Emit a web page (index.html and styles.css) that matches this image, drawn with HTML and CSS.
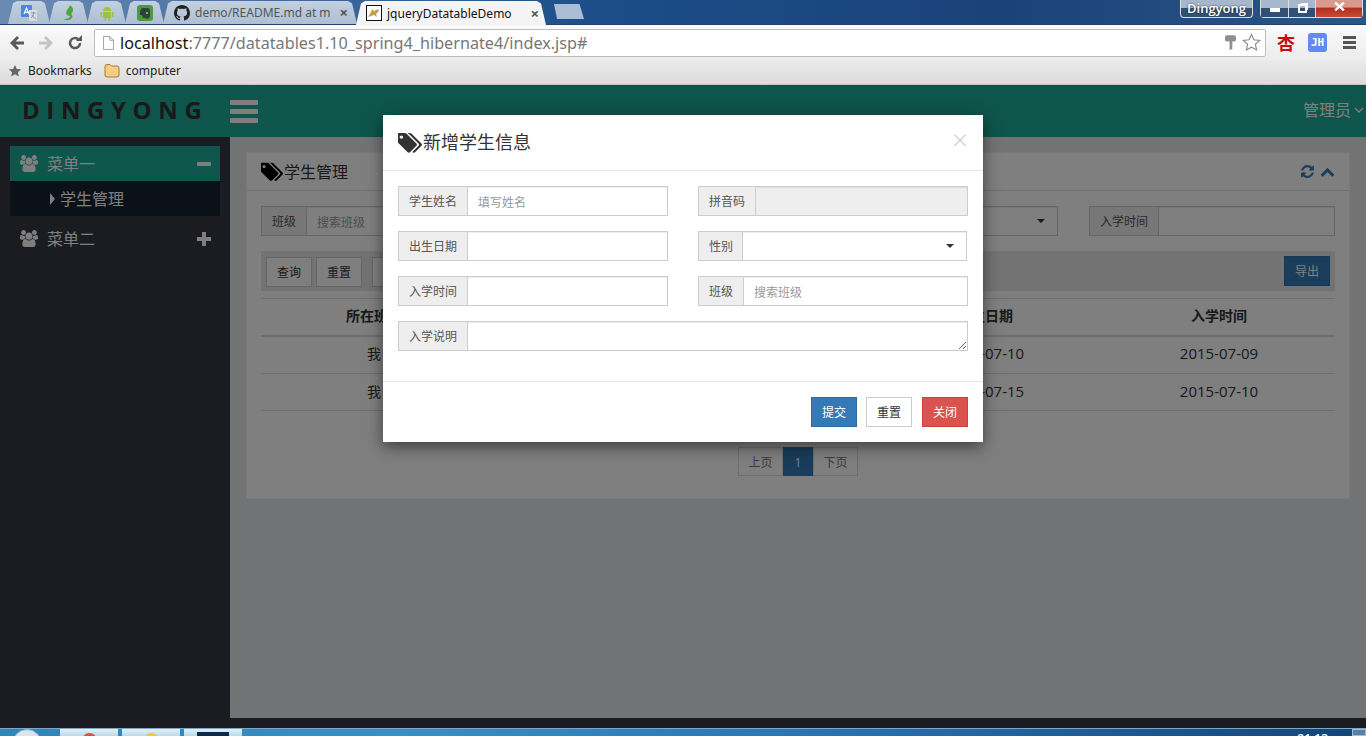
FILE: index.html
```html
<!DOCTYPE html>
<html lang="zh-CN">
<head>
    <meta charset="UTF-8">
    <title>jqueryDatatableDemo</title>
    <link rel="stylesheet" href="styles.css">
</head>
<body>
    <svg class="icon-defs" width="0" height="0">
        <symbol id="i-tags" viewBox="0 0 1920 1792"><path d="M384 448q0-53-37.500-90.500t-90.500-37.500-90.500 37.500-37.500 90.500 37.500 90.500 90.500 37.500 90.500-37.500 37.500-90.500zm1067 576q0 53-37 90l-491 492q-39 37-91 37-53 0-90-37l-715-716q-38-37-64.500-101t-26.500-117v-416q0-52 38-90t90-38h416q53 0 117 26.500t102 64.500l715 714q37 39 37 91zm384 0q0 53-37 90l-491 492q-39 37-91 37-36 0-59-14t-53-45l470-470q37-37 37-90 0-52-37-91l-715-714q-38-38-102-64.500t-117-26.500h224q53 0 117 26.500t102 64.500l715 714q37 39 37 91z"/></symbol>
        <symbol id="i-users" viewBox="0 0 1920 1792"><path d="M593 896q-162 5-265 128h-134q-82 0-138-40.500t-56-118.500q0-353 124-353 6 0 43.500 21t97.500 42.500 119 21.500q67 0 133-23-5 37-5 66 0 139 81 256zm1071 637q0 120-73 189.500t-194 69.500h-874q-121 0-194-69.500t-73-189.500q0-53 3.500-103.500t14-109 26.500-108.500 43-97.500 62-81 85.500-53.500 111.500-20q10 0 43 21.500t73 48 107 48 135 21.500 135-21.500 107-48 73-48 43-21.500q61 0 111.500 20t85.500 53.500 62 81 43 97.500 26.500 108.500 14 109 3.500 103.500zm-1024-1277q0 106-75 181t-181 75-181-75-75-181 75-181 181-75 181 75 75 181zm704 384q0 159-112.500 271.500t-271.500 112.500-271.500-112.500-112.500-271.500 112.500-271.500 271.500-112.500 271.500 112.500 112.500 271.500zm576 225q0 78-56 118.500t-138 40.500h-134q-103-123-265-128 81-117 81-256 0-29-5-66 66 23 133 23 59 0 119-21.500t97.500-42.500 43.500-21q124 0 124 353zm-128-609q0 106-75 181t-181 75-181-75-75-181 75-181 181-75 181 75 75 181z"/></symbol>
    </svg>

    <div class="tabbar">
        <div class="tab tab-pin">
            <svg class="fav" viewBox="0 0 16 16"><rect x="0" y="0" width="11" height="12" rx="1" fill="#4d85e8"/><path d="M8 5h8v11H8z" fill="#d9dee6"/><path d="M3 9l2.500-6L8 9M3.800 7.300h3.400" stroke="#fff" stroke-width="1.200" fill="none"/><path d="M10 8h5M12.500 7v1.500c0 2-1 3.500-2.500 4.500M11 10c1 2 2 3 4 3.500" stroke="#8a93a3" fill="none"/></svg>
        </div>
        <div class="tab tab-pin">
            <svg class="fav" viewBox="0 0 16 16"><path d="M9 0c4 3 4 6 1 9 2 1 2 3 0 5-3 2-6 1-7 0 3 0 6-1 6-3-3 0-5-3-3-6 1-2 3-3 3-5z" fill="#4fa63a"/></svg>
        </div>
        <div class="tab tab-pin">
            <svg class="fav" viewBox="0 0 16 16"><path d="M4 6a4 4 0 0 1 8 0zM4 7h8v6H4zM1.500 7h1.500v5H1.500zM13 7h1.500v5H13zM5.500 13H7v2.500H5.500zM9 13h1.500v2.500H9z" fill="#9fc23f"/></svg>
        </div>
        <div class="tab tab-pin">
            <svg class="fav" viewBox="0 0 16 16"><rect x="0" y="0" width="16" height="16" rx="3" fill="#4a9b3c"/><path d="M5 3h5q3 0 3 3v6q-2 3-5 1-3 0-3-3H3V6z" fill="#33413a"/><path d="M9 7h2v2H9z" fill="#6fbf5f"/></svg>
        </div>
        <div class="tab tab-wide">
            <svg class="fav" viewBox="0 0 16 16"><path fill="#222" d="M8 0C3.580 0 0 3.580 0 8c0 3.540 2.290 6.530 5.470 7.590.4.070.550-.170.550-.380 0-.190-.010-.820-.010-1.490-2.010.370-2.530-.490-2.690-.940-.090-.230-.480-.940-.820-1.130-.280-.150-.680-.520-.010-.530.630-.010 1.080.580 1.230.820.720 1.210 1.870.870 2.330.660.070-.520.280-.870.510-1.070-1.780-.2-3.640-.890-3.640-3.950 0-.870.310-1.590.820-2.150-.080-.2-.360-1.020.080-2.120 0 0 .670-.210 2.200.820.640-.180 1.320-.270 2-.270.680 0 1.360.090 2 .270 1.530-1.040 2.200-.820 2.200-.820.440 1.100.160 1.920.080 2.120.510.560.820 1.270.820 2.150 0 3.070-1.870 3.750-3.650 3.950.290.250.540.730.540 1.480 0 1.070-.010 1.930-.010 2.200 0 .210.150.460.550.380A8.013 8.013 0 0 0 16 8c0-4.420-3.580-8-8-8z"/></svg>
            <span class="tab-title">demo/README.md at m</span>
            <span class="tab-close">×</span>
        </div>
        <div class="tab tab-wide tab-active">
            <svg class="fav" viewBox="0 0 16 16"><rect x=".5" y=".5" width="15" height="15" fill="#fff" stroke="#111"/><path d="M2 12l3-5 1-3 2 2 4-2 1 2-3 3 1 3-3-2-3 1z" fill="#c9a04a"/></svg>
            <span class="tab-title">jqueryDatatableDemo</span>
            <span class="tab-close">×</span>
        </div>
        <div class="tab-new"></div>
        <div class="win-controls">
            <div class="win-user">Dingyong</div>
            <div class="win-btns">
                <div class="win-btn win-min"><span class="win-dash"></span></div>
                <div class="win-btn win-max"><span class="win-rest"></span></div>
                <div class="win-btn win-close">
                    <svg class="win-x" viewBox="0 0 10 8"><path d="M1 .5l8 7M9 .5l-8 7" stroke="#fff" stroke-width="2.200"/></svg>
                </div>
            </div>
        </div>
    </div>

    <div class="toolbar">
        <svg class="nav-ico" viewBox="0 0 16 16"><path d="M15 6.500H6.500L10 3 8 1 1 8l7 7 2-2-3.500-3.500H15z" fill="#5a5a5a"/></svg>
        <svg class="nav-ico nav-fwd" viewBox="0 0 16 16"><path d="M1 6.500h8.500L6 3l2-2 7 7-7 7-2-2 3.500-3.500H1z" fill="#c4c4c4"/></svg>
        <svg class="nav-ico nav-reload" viewBox="0 0 16 16"><path d="M13 8a5 5 0 1 1-1.500-3.500" fill="none" stroke="#5a5a5a" stroke-width="2.500"/><path d="M9 6h6V0z" fill="#5a5a5a"/></svg>
        <div class="omnibox">
            <svg class="page-ico" viewBox="0 0 12 15"><path d="M.5.5h7l4 4v10H.500z" fill="#fff" stroke="#999"/><path d="M7.500.5v4h4" fill="none" stroke="#999"/></svg>
            <span class="url"><b>localhost</b>:7777/datatables1.10_spring4_hibernate4/index.jsp#</span>
            <svg class="key-ico" viewBox="0 0 12 16"><path d="M2 0h8q2 0 2 2v3q0 2-2 2H8v8l-1.500 1H5V7H2Q0 7 0 5V2q0-2 2-2z" fill="#8f8f8f"/></svg>
            <svg class="star-ico" viewBox="0 0 20 20"><path d="M10 1.500l2.600 5.600 6 .7-4.500 4.100 1.300 6-5.400-3-5.400 3 1.300-6L1.400 7.800l6-.7z" fill="#fff" stroke="#8c8c8c" stroke-width="1.200"/></svg>
        </div>
        <span class="ext-xing">杏</span>
        <span class="ext-jh">JH</span>
        <div class="chrome-menu"><i></i><i></i><i></i></div>
    </div>

    <div class="bookmarks">
        <svg class="bm-star" viewBox="0 0 16 16"><path d="M8 1l2.100 4.600 5 .5-3.800 3.300 1.100 4.900L8 11.800l-4.400 2.500 1.100-4.900L.9 6.100l5-.5z" fill="#666"/></svg>
        <span class="bm-text">Bookmarks</span>
        <svg class="bm-folder" viewBox="0 0 16 14"><path d="M1 2.500q0-2 2-2h3l1.500 1.500H13q2 0 2 2v7q0 2-2 2H3q-2 0-2-2z" fill="#f3cf85" stroke="#a87a34"/></svg>
        <span class="bm-text">computer</span>
    </div>

    <div class="app">
        <div class="app-head">
            <div class="brand">DINGYONG</div>
            <div class="burger"><i></i><i></i><i></i></div>
            <div class="user-menu">
                管理员
                <svg class="user-caret" viewBox="0 0 10 6"><path d="M1 1l4 4 4-4" fill="none" stroke="#fff" stroke-width="1.300"/></svg>
            </div>
        </div>

        <div class="app-body">
            <div class="sidebar">
                <div class="menu-item menu-active">
                    <svg class="menu-ico"><use href="#i-users"/></svg>
                    <span class="menu-label">菜单一</span>
                    <span class="menu-minus"></span>
                </div>
                <div class="submenu">
                    <span class="sub-caret"></span><span class="sub-label">学生管理</span>
                </div>
                <div class="menu-item">
                    <svg class="menu-ico"><use href="#i-users"/></svg>
                    <span class="menu-label">菜单二</span>
                    <span class="menu-plus"></span>
                </div>
            </div>

            <div class="main">
                <div class="panel">
                    <div class="panel-head">
                        <svg class="tag-ico"><use href="#i-tags"/></svg>
                        <span class="panel-title">学生管理</span>
                        <div class="panel-tools">
                            <svg viewBox="0 0 1792 1792"><path d="M1639 1056q0 5-1 7-64 268-268 434.500t-478 166.500q-146 0-282.500-55t-243.500-157l-129 129q-19 19-45 19t-45-19-19-45v-448q0-26 19-45t45-19h448q26 0 45 19t19 45-19 45l-137 137q71 66 161 102t187 36q134 0 250-65t186-179q11-17 53-117 8-23 30-23h192q13 0 22.500 9.500t9.500 22.500zm25-800v448q0 26-19 45t-45 19h-448q-26 0-45-19t-19-45 19-45l138-138q-148-137-349-137-134 0-250 65t-186 179q-11 17-53 117-8 23-30 23h-199q-13 0-22.500-9.500t-9.500-22.500v-7q65-268 270-434.500t480-166.500q146 0 284 55.500t245 156.500l130-129q19-19 45-19t45 19 19 45z"/></svg>
                            <svg viewBox="0 0 1792 1792"><path d="M1683 1331l-166 165q-19 19-45 19t-45-19l-531-531-531 531q-19 19-45 19t-45-19l-166-165q-19-19-19-45.500t19-45.500l742-741q19-19 45-19t45 19l742 741q19 19 19 45.500t-19 45.500z"/></svg>
                        </div>
                    </div>
                    <div class="panel-body">
                        <div class="search-row">
                            <div class="group"><span class="addon">班级</span><input class="field" placeholder="搜索班级"></div>
                            <div class="group"><span class="addon">姓名</span><input class="field"></div>
                            <div class="group group-short"><span class="addon">性别</span><div class="field field-select"><span class="caret"></span></div></div>
                            <div class="group"><span class="addon">入学时间</span><input class="field"></div>
                        </div>
                        <div class="action-bar">
                            <button class="btn btn-low">查询</button>
                            <button class="btn btn-low">重置</button>
                            <button class="btn btn-low btn-gap">新增</button>
                            <button class="btn btn-primary btn-end">导出</button>
                        </div>
                        <table class="grid">
                            <thead>
                                <tr><th class="col-class">所在班级</th><th>姓名</th><th>性别</th><th class="col-birth">出生日期</th><th class="col-enter">入学时间</th></tr>
                            </thead>
                            <tbody>
                                <tr><td>我</td><td></td><td></td><td class="cell-date">2015-07-10</td><td class="cell-date">2015-07-09</td></tr>
                                <tr><td>我</td><td></td><td></td><td class="cell-date">2015-07-15</td><td class="cell-date">2015-07-10</td></tr>
                            </tbody>
                        </table>
                        <div class="pager">
                            <span class="page">上页</span><span class="page page-on">1</span><span class="page">下页</span>
                        </div>
                    </div>
                </div>
            </div>
        </div>

        <div class="backdrop">
            <div class="modal">
                <div class="modal-head">
                    <svg class="modal-tag"><use href="#i-tags"/></svg>
                    <span class="modal-title">新增学生信息</span>
                    <span class="modal-x">×</span>
                </div>
                <div class="modal-body">
                    <div class="form-grid">
                        <div class="group"><span class="addon">学生姓名</span><input class="field" placeholder="填写姓名"></div>
                        <div class="group"><span class="addon">拼音码</span><input class="field field-off" disabled></div>
                        <div class="group"><span class="addon">出生日期</span><input class="field"></div>
                        <div class="group group-short"><span class="addon">性别</span><div class="field field-select"><span class="caret"></span></div></div>
                        <div class="group"><span class="addon">入学时间</span><input class="field"></div>
                        <div class="group"><span class="addon">班级</span><input class="field" placeholder="搜索班级"></div>
                        <div class="group group-full"><span class="addon">入学说明</span><textarea class="field field-area"></textarea></div>
                    </div>
                </div>
                <div class="modal-foot">
                    <button class="btn btn-primary">提交</button>
                    <button class="btn">重置</button>
                    <button class="btn btn-danger">关闭</button>
                </div>
            </div>
        </div>
    </div>

    <div class="taskbar">
        <div class="start-orb"></div>
        <div class="task-btn"><i class="task-dot task-red"></i></div>
        <div class="task-btn"><i class="task-dot task-yellow"></i></div>
        <div class="task-btn"><i class="task-dark"></i></div>
        <span class="clock">21:13</span>
        <div class="show-desktop"></div>
    </div>
</body>
</html>
```

FILE: styles.css
```css
* {
    box-sizing: border-box;
}
html, body {
    margin: 0;
    height: 736px;
    overflow: hidden;
}
body {
    font-family: "Open Sans", "Noto Sans CJK SC", sans-serif;
    font-size: 14px;
    color: #333;
    background: #343842;
    display: flex;
    flex-direction: column;
}
.icon-defs {
    position: absolute;
}

/* browser tabs */
.tabbar {
    height: 25px;
    flex: none;
    display: flex;
    align-items: flex-end;
    padding-left: 8px;
    background: linear-gradient(90deg, #6c8bb3 0, #3f6a9e 300px, #1c4d88 600px, #1a4379 1000px, #2a5688 1366px);
    border-bottom: 1px solid #23416b;
    position: relative;
}
.tab {
    height: 23px;
    display: flex;
    align-items: center;
    background: linear-gradient(#c2d0e0, #aebfd3);
    clip-path: polygon(0 100%, 5px 10%, 9px 0, calc(100% - 9px) 0, calc(100% - 5px) 10%, 100% 100%);
    margin-right: -1px;
}
.tab-pin {
    width: 39px;
    justify-content: center;
}
.tab-pin:first-child {
    width: 42px;
}
.tab-wide {
    width: 194px;
    padding: 0 9px 0 11px;
    font-size: 12px;
    color: #555;
    font-family: "Noto Sans", sans-serif;
}
.tab-active {
    background: #f4f4f4;
    color: #111;
    height: 24px;
    margin-bottom: -1px;
    padding: 0 7px 0 10px;
    width: 190px;
}
.fav {
    width: 16px;
    height: 16px;
    flex: none;
}
.tab-title {
    margin-left: 5px;
    white-space: nowrap;
    flex: 1;
}
.tab-close {
    font-size: 15px;
    font-weight: 700;
    color: #555;
    line-height: 1;
}
.tab-new {
    width: 30px;
    height: 15px;
    margin: 0 0 5px 9px;
    background: #a9bdd4;
    clip-path: polygon(0 0, 85% 0, 100% 100%, 10% 100%);
}
.win-controls {
    margin-left: auto;
    align-self: flex-start;
    display: flex;
    gap: 7px;
    padding-right: 3px;
}
.win-user {
    width: 73px;
    height: 18px;
    border: 1px solid #d5dde7;
    border-top: 0;
    border-radius: 0 0 4px 4px;
    background: linear-gradient(#a8b8cc 50%, #324f74 50%);
    color: #fff;
    font-size: 13px;
    font-weight: 600;
    text-align: center;
    line-height: 17px;
    text-shadow: 0 0 2px #223;
}
.win-btns {
    display: flex;
    height: 18px;
    border: 1px solid #d5dde7;
    border-top: 0;
    border-radius: 0 0 4px 4px;
}
.win-btn {
    width: 28px;
    background: linear-gradient(#a8b8cc 50%, #324f74 50%);
    border-right: 1px solid #d5dde7;
    display: flex;
    align-items: center;
    justify-content: center;
}
.win-max {
    width: 27px;
}
.win-close {
    width: 46px;
    border: 0;
    background: linear-gradient(#d99a8e 40%, #b52f20 50%, #c74a36);
}
.win-x {
    width: 11px;
    height: 9px;
    margin-bottom: 4px;
}
.win-dash {
    width: 10px;
    height: 4px;
    background: #fff;
    margin-top: 3px;
}
.win-rest {
    width: 9px;
    height: 9px;
    border: 2px solid #fff;
    box-shadow: 2px -2px 0 -1px #fff;
}

/* browser toolbar */
.toolbar {
    height: 35px;
    flex: none;
    display: flex;
    align-items: center;
    padding: 0 7px 0 9px;
    background: linear-gradient(#fafafa, #ececec);
}
.nav-ico {
    width: 16px;
    height: 16px;
    flex: none;
}
.nav-fwd, .nav-reload {
    margin-left: 13px;
}
.nav-reload {
    margin-right: 11px;
}
.omnibox {
    width: 1172px;
    height: 28px;
    flex: none;
    display: flex;
    align-items: center;
    padding: 0 4px 0 8px;
    background: #fff;
    border: 1px solid #bdbdbd;
    border-radius: 2px;
}
.page-ico {
    width: 11px;
    height: 14px;
}
.url {
    margin-left: 6px;
    flex: 1;
    font-family: "Noto Sans", sans-serif;
    font-size: 16.2px;
    color: #777;
    white-space: nowrap;
}
.url b {
    font-weight: 400;
    color: #111;
}
.key-ico {
    width: 11px;
    height: 15px;
    margin-right: 6px;
}
.star-ico {
    width: 19px;
    height: 19px;
}
.ext-xing {
    width: 19px;
    margin-left: 11px;
    color: #cc0c0c;
    font-size: 18px;
    font-weight: 700;
    line-height: 1;
}
.ext-jh {
    width: 19px;
    height: 19px;
    margin-left: 12px;
    background: #6488f2;
    border-radius: 3px;
    color: #fff;
    font: 700 11px/19px "DejaVu Sans Mono", monospace;
    text-align: center;
}
.chrome-menu {
    margin-left: 16px;
    width: 13px;
    display: flex;
    flex-direction: column;
    gap: 2px;
}
.chrome-menu i {
    height: 3px;
    background: #555;
}

/* bookmarks bar */
.bookmarks {
    height: 25px;
    flex: none;
    display: flex;
    align-items: center;
    padding: 0 0 3px 8px;
    background: linear-gradient(#ebebeb, #dcdcdc);
    border-bottom: 1px solid #c6c6c6;
}
.bm-star {
    width: 14px;
    height: 14px;
}
.bm-text {
    margin-left: 6px;
    font-family: "Noto Sans", sans-serif;
    font-size: 12px;
    color: #222;
}
.bm-folder {
    width: 16px;
    height: 14px;
    margin-left: 12px;
}

/* app */
.app {
    position: relative;
    height: 643px;
    flex: none;
    display: flex;
    flex-direction: column;
}
.app-head {
    height: 52px;
    flex: none;
    display: flex;
    align-items: center;
    background: #1cab97;
    padding-right: 2px;
}
.brand {
    width: 230px;
    padding: 0 0 4px 22px;
    font-size: 24px;
    font-weight: 700;
    letter-spacing: 6.6px;
    color: #333;
    white-space: nowrap;
}
.burger {
    width: 28px;
    display: flex;
    flex-direction: column;
    gap: 4px;
}
.burger i {
    height: 5px;
    background: #fff;
    border-radius: 1px;
}
.user-menu {
    margin-left: auto;
    padding-bottom: 4px;
    font-size: 16px;
    color: #fff;
    display: flex;
    align-items: center;
    gap: 3px;
}
.user-caret {
    width: 10px;
    height: 6px;
    margin-top: 2px;
}
.app-body {
    flex: 1;
    display: flex;
    align-items: flex-start;
    background: #343842;
}
.sidebar {
    width: 230px;
    flex: none;
    padding: 9px 10px;
}
.menu-item {
    height: 35px;
    display: flex;
    align-items: center;
    padding: 0 9px 0 10px;
    color: #fff;
    font-size: 16px;
}
.menu-active {
    background: #1cab97;
}
.menu-ico {
    width: 18px;
    height: 17px;
    fill: #fff;
}
.menu-label {
    margin-left: 9px;
    flex: 1;
    padding-bottom: 2px;
}
.menu-minus {
    width: 14px;
    height: 4px;
    background: #fff;
    border-radius: 1px;
}
.menu-plus {
    width: 14px;
    height: 14px;
    background: linear-gradient(#fff, #fff) center/100% 4px no-repeat, linear-gradient(#fff, #fff) center/4px 100% no-repeat;
}
.submenu {
    height: 35px;
    margin-bottom: 5px;
    padding-left: 40px;
    display: flex;
    align-items: center;
    background: #142231;
    color: #fff;
    font-size: 16px;
}
.sub-label {
    padding-bottom: 2px;
}
.sub-caret {
    width: 0;
    height: 0;
    margin-right: 5px;
    border-left: 5px solid #fff;
    border-top: 6px solid transparent;
    border-bottom: 6px solid transparent;
}
.main {
    flex: 1;
    height: 581px;
    padding: 15px 16px;
    background: #e5e7ea;
}
.panel {
    height: 347px;
    background: #fff;
    border: 1px solid #f3f3f3;
}
.panel-head {
    height: 38px;
    display: flex;
    align-items: center;
    padding: 0 14px;
    border-bottom: 1px solid #e0e0e0;
}
.tag-ico {
    width: 23px;
    height: 22px;
}
.panel-title {
    font-size: 16px;
    flex: 1;
    padding-bottom: 2px;
}
.panel-tools {
    display: flex;
    gap: 5px;
    fill: #337ab7;
}
.panel-tools svg {
    width: 15px;
    height: 15px;
}
.panel-body {
    padding: 15px 14px;
}
.search-row {
    display: grid;
    grid-template-columns: repeat(4, 246px);
    column-gap: 30px;
}
.group {
    height: 30px;
    display: flex;
    font-size: 12px;
}
.addon {
    flex: none;
    padding: 0 10px;
    line-height: 30px;
    color: #555;
    background: #eee;
    border: 1px solid #ccc;
    border-right: 0;
    white-space: nowrap;
}
.field {
    flex: 1;
    min-width: 0;
    height: 30px;
    padding: 2px 10px 0;
    background: #fff;
    border: 1px solid #ccc;
    border-radius: 0;
    font: inherit;
    box-shadow: inset 0 1px 1px rgba(0, 0, 0, .075);
}
.field::placeholder {
    color: #999;
}
.field-off {
    background: #eee;
}
.field-select {
    position: relative;
}
.caret {
    position: absolute;
    right: 12px;
    top: 12px;
    border-top: 4px solid #333;
    border-left: 4px solid transparent;
    border-right: 4px solid transparent;
}
.action-bar {
    height: 40px;
    margin-top: 15px;
    padding: 5px;
    display: flex;
    gap: 4px;
    background: #e6e7e9;
}
.btn {
    width: 46px;
    height: 30px;
    padding: 0;
    background: #fff;
    border: 1px solid #ccc;
    border-radius: 0;
    color: #333;
    font: inherit;
    font-size: 12px;
}
.btn-low {
    margin-top: 1px;
}
.btn-gap {
    margin-left: 6px;
}
.btn-end {
    margin-left: auto;
}
.btn-primary {
    background: #337ab7;
    border-color: #2e6da4;
    color: #fff;
}
.btn-danger {
    margin-left: 1px;
    background: #d9534f;
    border-color: #d43f3a;
    color: #fff;
}
.grid {
    width: 100%;
    margin-top: 7px;
    border-collapse: collapse;
    table-layout: fixed;
    font-size: 14px;
}
.grid th {
    height: 37px;
    padding: 0 0 4px;
    border-top: 1px solid #ddd;
    border-bottom: 2px solid #ddd;
    color: #333;
}
.grid td {
    height: 37px;
    padding: 0 0 3px;
    border-bottom: 1px solid #ddd;
    text-align: center;
}
.grid tbody tr:first-child td {
    height: 38px;
}
.grid .cell-date {
    font-size: 15px;
}
.col-class {
    width: 226px;
}
.col-birth {
    width: 236px;
}
.col-enter {
    width: 232px;
}
.pager {
    margin-top: 36px;
    display: flex;
    justify-content: center;
}
.page {
    width: 45px;
    height: 29px;
    line-height: 29px;
    text-align: center;
    font-size: 12px;
    color: #777;
    background: #fff;
    border: 1px solid #ddd;
}
.page-on {
    width: 30px;
    background: #337ab7;
    border-color: #337ab7;
    color: #fff;
}

/* modal over the app */
.backdrop {
    position: absolute;
    inset: 0;
    background: rgba(0, 0, 0, .5);
}
.modal {
    width: 600px;
    margin: 30px auto 0;
    background: #fff;
    box-shadow: 0 5px 15px rgba(0, 0, 0, .5);
}
.modal-head {
    height: 56px;
    display: flex;
    align-items: center;
    padding: 0 15px;
    border-bottom: 1px solid #e5e5e5;
}
.modal-tag {
    width: 25px;
    height: 24px;
    fill: #333;
}
.modal-title {
    flex: 1;
    padding-bottom: 3px;
    font-size: 18px;
}
.modal-x {
    align-self: flex-start;
    margin-top: 10px;
    font-size: 28px;
    line-height: 1;
    font-weight: 300;
    color: #ccc;
}
.modal-body {
    padding: 15px 15px 30px;
}
.form-grid {
    display: grid;
    grid-template-columns: 270px 270px;
    gap: 15px 30px;
}
.group-full {
    grid-column: 1 / 3;
}
.group-short {
    margin-right: 1px;
}
.group-short .addon {
    padding-right: 9px;
}
.field-area {
    display: block;
    resize: vertical;
}
.modal-foot {
    display: flex;
    justify-content: flex-end;
    gap: 9px;
    padding: 15px;
    border-top: 1px solid #e5e5e5;
}

/* windows taskbar */
.taskbar {
    height: 8px;
    flex: none;
    display: flex;
    overflow: hidden;
    background: linear-gradient(90deg, #2e86b8 0, #3a8fc4 400px, #2a74b4 800px, #114478 1366px);
    border-top: 1px solid #7fa6c8;
    position: relative;
}
.start-orb {
    width: 30px;
    height: 30px;
    margin: 0 18px 0 12px;
    border-radius: 50%;
    background: #d8e4ee;
    border: 1px solid #8fb0c8;
}
.task-btn {
    width: 58px;
    height: 8px;
    margin-right: 4px;
    display: flex;
    justify-content: center;
    background: linear-gradient(#e2f0f6, #b5d8e6);
}
.task-dot {
    width: 15px;
    height: 15px;
    margin-top: 4px;
    border-radius: 50%;
}
.task-red {
    background: #e0503a;
}
.task-yellow {
    background: #eec83c;
}
.task-dark {
    width: 32px;
    height: 8px;
    margin-top: 3px;
    background: #10284c;
}
.clock {
    margin-left: auto;
    margin-right: 24px;
    margin-top: 3px;
    color: #fff;
    font-size: 12px;
    font-weight: 600;
    line-height: 14px;
}
.show-desktop {
    width: 14px;
    background: #5a7ea4;
    border: 1px solid #a5bdd4;
}
```
